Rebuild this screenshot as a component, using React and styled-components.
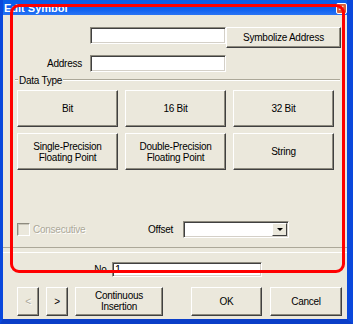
import styled, { createGlobalStyle } from 'styled-components'

const FACE = '#ebe8dc'
const FONT = `'Liberation Sans', Arial, sans-serif`

const Global = createGlobalStyle`
  html, body {
    margin: 0;
    padding: 0;
    background: ${FACE};
  }
  * { box-sizing: border-box; }
`

const Window = styled.div`
  position: relative;
  width: 353px;
  height: 324px;
  overflow: hidden;
  display: flex;
  flex-direction: column;
  background: ${FACE};
  border-left: 3px solid #0a48dc;
  border-right: 6px solid #0a48dc;
  border-bottom: 5px solid #0a3ec8;
  font-family: ${FONT};
  font-size: 10px;
  letter-spacing: -0.25px;
  color: #000;
`

const TitleBar = styled.div`
  height: 15px;
  margin-left: -3px;
  margin-right: -6px;
  flex: none;
  display: flex;
  align-items: flex-end;
  justify-content: space-between;
  padding: 0 6px 1px 4px;
  background: linear-gradient(180deg, #0a5ee8 0%, #0b5ff0 60%, #2a74f4 100%);
  color: #fff;
  font-weight: bold;
  font-size: 11px;
  line-height: 12px;
  letter-spacing: 0;
`

const CloseBox = styled.div`
  width: 11px;
  height: 11px;
  border: 1px solid #fff;
  border-radius: 2px;
  background: #d8603a;
  color: #fff;
  font-size: 9px;
  line-height: 9px;
  text-align: center;
`

const Body = styled.div`
  flex: 1;
  display: flex;
  flex-direction: column;
`

const Row = styled.div`
  display: flex;
  align-items: ${(p) => p.$align || 'center'};
  margin-top: ${(p) => p.$top}px;
  padding-left: ${(p) => p.$left || 0}px;
  height: ${(p) => p.$h}px;
`

const Label = styled.div`
  width: ${(p) => p.$w}px;
  flex: none;
  text-align: ${(p) => p.$align || 'right'};
  padding-right: ${(p) => p.$pr || 0}px;
  color: ${(p) => (p.$disabled ? '#aca899' : '#000')};
  text-shadow: ${(p) => (p.$disabled ? '1px 1px 0 #fff' : 'none')};
`

const Field = styled.div`
  width: ${(p) => p.$w}px;
  height: ${(p) => p.$h}px;
  flex: none;
  background: #fff;
  border-top: 1px solid #8d8a7e;
  border-left: 1px solid #8d8a7e;
  border-bottom: 1px solid #fff;
  border-right: 1px solid #fff;
  box-shadow: inset 1px 1px 0 #404040, inset -1px -1px 0 #d4d0c8;
  padding: 0 2px;
  font-size: 11px;
  line-height: 12px;
`

const Button = styled.button`
  width: ${(p) => p.$w}px;
  height: ${(p) => p.$h}px;
  margin-left: ${(p) => p.$ml || 0}px;
  flex: none;
  padding: 0;
  background: ${FACE};
  border-top: 1px solid #fff;
  border-left: 1px solid #fff;
  border-bottom: 1px solid #404040;
  border-right: 1px solid #404040;
  box-shadow: inset -1px -1px 0 #8d8a7e;
  font-family: ${FONT};
  font-size: 10px;
  letter-spacing: -0.25px;
  line-height: 11px;
  color: ${(p) => (p.$disabled ? '#aca899' : '#000')};
  text-shadow: ${(p) => (p.$disabled ? '1px 1px 0 #fff' : 'none')};
`

const GroupHead = styled.div`
  display: flex;
  align-items: center;
  height: 12px;
  margin-top: 2px;
  padding-left: 12px;
  padding-right: 7px;
`

const Etch = styled.div`
  height: 2px;
  border-top: 1px solid #aca899;
  border-bottom: 1px solid #fff;
  flex: ${(p) => (p.$grow ? 1 : 'none')};
  width: ${(p) => (p.$grow ? 'auto' : '3px')};
`

const GroupTitle = styled.span`
  padding: 0 1px;
`

const TypeGrid = styled.div`
  display: grid;
  grid-template-columns: repeat(3, 101px);
  grid-auto-rows: 37px;
  column-gap: 7px;
  row-gap: 6px;
  margin-top: 4px;
  padding-left: 14px;
`

const Check = styled.div`
  width: 13px;
  height: 13px;
  flex: none;
  margin-left: 14px;
  margin-right: 3px;
  border-top: 1px solid #8d8a7e;
  border-left: 1px solid #8d8a7e;
  border-bottom: 1px solid #fff;
  border-right: 1px solid #fff;
  box-shadow: inset 1px 1px 0 #c8c5b8;
`

const Combo = styled(Field)`
  display: flex;
  justify-content: flex-end;
  padding: 1px;
`

const DropBtn = styled.div`
  width: 15px;
  height: 100%;
  background: ${FACE};
  border-top: 1px solid #fff;
  border-left: 1px solid #fff;
  border-bottom: 1px solid #404040;
  border-right: 1px solid #404040;
  display: flex;
  align-items: center;
  justify-content: center;
  &::after {
    content: '';
    border-left: 3px solid transparent;
    border-right: 3px solid transparent;
    border-top: 3px solid #000;
  }
`

const Separator = styled(Etch)`
  margin-top: 9px;
`

const Spacer = styled.div`
  flex: 1;
`

const Annotation = styled.div`
  position: absolute;
  left: 7px;
  top: 4px;
  width: 335px;
  height: 269px;
  border: 3px solid #ff0000;
  border-radius: 9px;
  pointer-events: none;
`

export default function App() {
  return (
    <>
      <Global />
      <Window>
        <TitleBar>
          <span>Edit Symbol</span>
          <CloseBox>×</CloseBox>
        </TitleBar>
        <Body>
          <Row $top={12} $h={21} $left={87} $align='flex-start'>
            <Field $w={136} $h={17} />
            <Button $w={115} $h={21}>Symbolize Address</Button>
          </Row>
          <Row $top={7} $h={17}>
            <Label $w={87} $pr={8}>Address</Label>
            <Field $w={136} $h={17} />
          </Row>
          <GroupHead>
            <Etch />
            <GroupTitle>Data Type</GroupTitle>
            <Etch $grow />
          </GroupHead>
          <TypeGrid>
            <Button $w={101} $h={37}>Bit</Button>
            <Button $w={101} $h={37}>16 Bit</Button>
            <Button $w={101} $h={37}>32 Bit</Button>
            <Button $w={101} $h={37}>Single-Precision<br />Floating Point</Button>
            <Button $w={101} $h={37}>Double-Precision<br />Floating Point</Button>
            <Button $w={101} $h={37}>String</Button>
          </TypeGrid>
          <Row $top={51} $h={17}>
            <Check />
            <Label $w={115} $align='left' $disabled>Consecutive</Label>
            <Label $w={35} $align='left'>Offset</Label>
            <Combo $w={106} $h={17}>
              <DropBtn />
            </Combo>
          </Row>
          <Separator $grow />
          <Row $top={9} $h={15}>
            <Label $w={109} $pr={3}>No.</Label>
            <Field $w={150} $h={15}>1</Field>
          </Row>
          <Row $top={10} $h={29} $left={14}>
            <Button $w={22} $h={29} $disabled>&lt;</Button>
            <Button $w={22} $h={29} $ml={7}>&gt;</Button>
            <Button $w={88} $h={29} $ml={7}>Continuous<br />Insertion</Button>
            <Button $w={71} $h={29} $ml={28}>OK</Button>
            <Button $w={72} $h={29} $ml={8}>Cancel</Button>
          </Row>
          <Spacer />
        </Body>
        <Annotation />
      </Window>
    </>
  )
}
